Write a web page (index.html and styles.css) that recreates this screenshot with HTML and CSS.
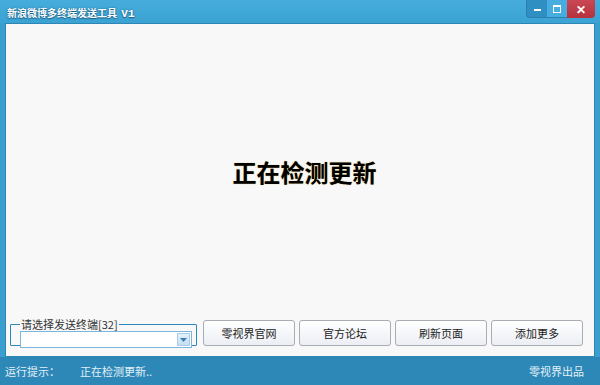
FILE: index.html
```html
<!DOCTYPE html>
<html lang="zh-CN">
<head>
    <meta charset="UTF-8">
    <title>新浪微博多终端发送工具 V1</title>
    <link rel="stylesheet" href="styles.css">
</head>
<body>
    <div class="window">
        <div class="titlebar">
            <span class="title">新浪微博多终端发送工具 <b class="ver">V1</b></span>
            <div class="controls">
                <div class="ctl-group">
                    <span class="ctl ctl-min"><i></i></span>
                    <span class="ctl ctl-max"><i></i></span>
                </div>
                <span class="ctl ctl-close">✕</span>
            </div>
        </div>

        <div class="content">
            <div class="message">正在检测更新</div>

            <div class="toolbar">
                <fieldset class="group">
                    <legend>请选择发送终端[32]</legend>
                    <div class="combo">
                        <span class="combo-btn">
                            <svg width="7" height="4" viewBox="0 0 7 4"><path d="M0 0h7L3.5 4z" fill="#3a7fb4"/></svg>
                        </span>
                    </div>
                </fieldset>
                <button class="btn">零视界官网</button>
                <button class="btn">官方论坛</button>
                <button class="btn">刷新页面</button>
                <button class="btn">添加更多</button>
            </div>
        </div>

        <div class="statusbar">
            <span class="status-label">运行提示：</span>
            <span class="status-text">正在检测更新..</span>
            <span class="status-right">零视界出品</span>
        </div>
    </div>
</body>
</html>
```

FILE: styles.css
```css
body {
    margin: 0;
    width: 600px;
    height: 385px;
    overflow: hidden;
    font-family: "Noto Sans CJK SC", "Liberation Sans", sans-serif;
}

.window {
    width: 600px;
    height: 385px;
    display: flex;
    flex-direction: column;
    background: #3a9fcf;
}

.titlebar {
    height: 23px;
    display: flex;
    justify-content: space-between;
    align-items: flex-start;
    background: linear-gradient(#45acdb, #3ba3d3);
    flex-shrink: 0;
}

.title {
    padding: 7px 0 0 7px;
    color: #fff;
    font-family: "Noto Sans CJK SC", sans-serif;
    font-weight: bold;
    font-size: 10px;
    line-height: 12px;
    text-shadow: 0 0 2px #1b5f85, 0 1px 1px #1b5f85;
}

.ver {
    margin-left: 2px;
    font-family: "Liberation Mono", monospace;
    font-size: 11px;
}

.controls {
    display: flex;
    margin-right: 5px;
}

.ctl-group {
    display: flex;
    background: #2f8fc2;
    border-radius: 0 0 0 4px;
    border: 1px solid #2a7fae;
    border-top: none;
    border-right: none;
}

.ctl {
    width: 20px;
    height: 17px;
    display: flex;
    align-items: center;
    justify-content: center;
}

.ctl-min i {
    width: 7px;
    height: 2px;
    background: #fff;
    margin-top: 2px;
}

.ctl-max {
    background: #47ade0;
}

.ctl-max i {
    width: 6px;
    height: 5px;
    border: 1px solid #fff;
    border-top-width: 2px;
}

.ctl-close {
    width: 28px;
    height: 18px;
    background: linear-gradient(#c94853, #b3323e);
    border-radius: 0 0 4px 0;
    color: #fff;
    font-size: 12px;
    font-weight: bold;
    line-height: 18px;
    text-align: center;
    display: block;
}

.content {
    flex: 1;
    margin: 0 5px 0 5px;
    background: #f8f8f8;
    border: 1px solid #2e86b5;
    display: flex;
    flex-direction: column;
}

.message {
    flex: 1;
    display: flex;
    align-items: center;
    justify-content: center;
    padding: 0 0 1px 9px;
    font-size: 24px;
    font-weight: bold;
    color: #000;
    text-shadow: 0 0 1px #c9a24a;
}

.toolbar {
    display: flex;
    align-items: flex-end;
    gap: 4px;
    padding: 0 0 10px 4px;
}

.group {
    margin: 0 2px 0 0;
    padding: 2px 4px 3px 9px;
    width: 172px;
    height: 19px;
    border: 1px solid #2d86bd;
    border-radius: 1px;
}

.group legend {
    padding: 0 1px;
    margin-left: 0;
    font-size: 11px;
    line-height: 9px;
    color: #333;
}

.combo {
    height: 15px;
    background: #fff;
    border: 1px solid #7db6db;
    display: flex;
    justify-content: flex-end;
}

.combo-btn {
    width: 13px;
    margin: 1px;
    display: flex;
    align-items: center;
    justify-content: center;
    background: linear-gradient(#e4f1fb, #c4def2);
    border: 1px solid #a9cde8;
    box-sizing: border-box;
}

.btn {
    width: 92px;
    height: 26px;
    padding: 0;
    border: 1px solid #a8acb3;
    border-radius: 3px;
    background: linear-gradient(#ffffff, #ebeef3);
    font-family: "Noto Sans CJK SC", sans-serif;
    font-size: 11px;
    color: #222;
}

.statusbar {
    height: 28px;
    display: flex;
    align-items: center;
    padding: 0 16px 0 5px;
    background: #2d88b8;
    color: #e3f0f7;
    font-size: 11px;
    flex-shrink: 0;
}

.status-label {
    width: 75px;
}

.status-right {
    margin-left: auto;
}
```
